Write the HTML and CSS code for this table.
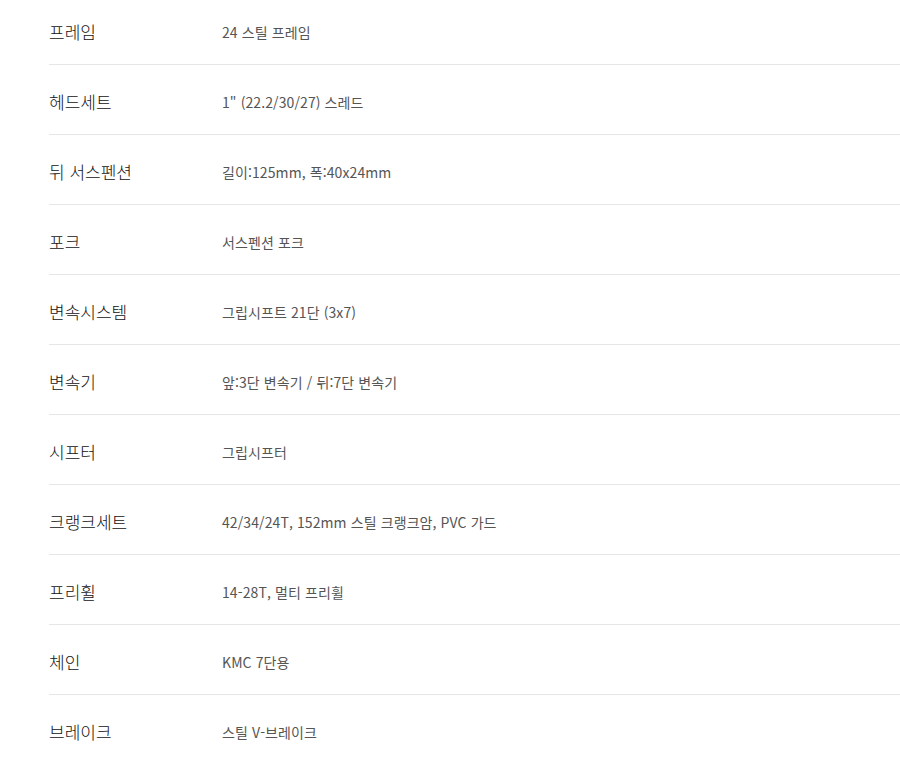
FILE: index.html
```html
<!DOCTYPE html>
<html lang="ko">
<head>
<meta charset="utf-8">
<title>사양</title>
<link rel="stylesheet" href="styles.css">
</head>
<body>
<div class="spec">
  <div class="row"><div class="label">프레임</div><div class="value">24 스틸 프레임</div></div>
  <div class="row"><div class="label">헤드세트</div><div class="value">1" (22.2/30/27) 스레드</div></div>
  <div class="row"><div class="label">뒤 서스펜션</div><div class="value">길이:125mm, 폭:40x24mm</div></div>
  <div class="row"><div class="label">포크</div><div class="value">서스펜션 포크</div></div>
  <div class="row"><div class="label">변속시스템</div><div class="value">그립시프트 21단 (3x7)</div></div>
  <div class="row"><div class="label">변속기</div><div class="value">앞:3단 변속기 / 뒤:7단 변속기</div></div>
  <div class="row"><div class="label">시프터</div><div class="value">그립시프터</div></div>
  <div class="row"><div class="label">크랭크세트</div><div class="value">42/34/24T, 152mm 스틸 크랭크암, PVC 가드</div></div>
  <div class="row"><div class="label">프리휠</div><div class="value">14-28T, 멀티 프리휠</div></div>
  <div class="row"><div class="label">체인</div><div class="value">KMC 7단용</div></div>
  <div class="row"><div class="label">브레이크</div><div class="value">스틸 V-브레이크</div></div>
</div>
</body>
</html>
```
FILE: styles.css
```css
html, body {
  margin: 0;
  padding: 0;
  background: #fff;
}
body {
  font-family: "Noto Sans CJK KR", "Noto Sans", sans-serif;
  overflow: hidden;
}
.spec {
  margin-top: -5px;
  padding-left: 49px;
}
.row {
  display: flex;
  align-items: center;
  box-sizing: border-box;
  height: 70px;
  padding-top: 4px;
  border-bottom: 1px solid #e6e6e6;
}
.label {
  width: 173px;
  flex: none;
  font-size: 17px;
  font-weight: 300;
  color: #111;
}
.value {
  font-size: 14px;
  letter-spacing: 0.1px;
  color: #555;
}
```
